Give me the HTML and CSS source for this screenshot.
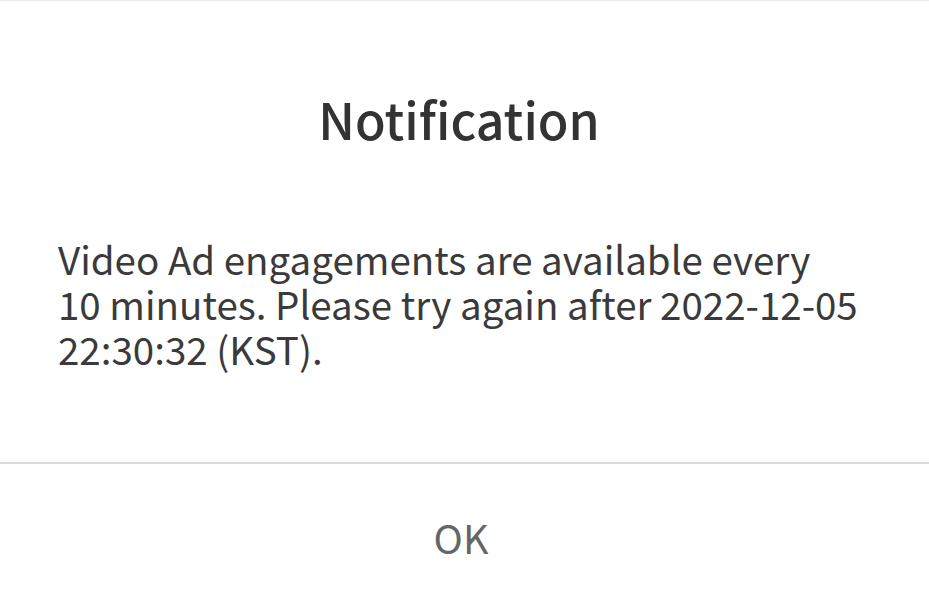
FILE: index.html
```html
<!DOCTYPE html>
<html lang="en">
<head>
  <meta charset="UTF-8">
  <meta name="viewport" content="width=device-width, initial-scale=1.0">
  <title>Notification</title>
  <link rel="stylesheet" href="styles.css">
</head>
<body>
  <div class="dialog">
    <div class="dialog-body">
      <h1 class="dialog-title">Notification</h1>
      <p class="dialog-message">Video Ad engagements are available every<br>10 minutes. Please try again after 2022-12-05<br>22:30:32 (KST).</p>
    </div>
    <div class="dialog-actions">
      <button class="btn-ok">OK</button>
    </div>
  </div>
</body>
</html>
```

FILE: styles.css
```css
html, body {
  margin: 0;
  padding: 0;
  background-color: #fff;
}

body {
  font-family: "Noto Sans CJK KR", "Noto Sans", sans-serif;
}

.dialog {
  width: 929px;
  height: 608px;
  border-top: 1px solid #ebebeb;
  box-sizing: border-box;
  display: flex;
  flex-direction: column;
}

.dialog-body {
  height: 461px;
  padding: 0 69px 0 58px;
  border-bottom: 2px solid #dcdcdc;
}

.dialog-title {
  margin: 84px 0 0;
  text-align: center;
  font-size: 50px;
  font-weight: 500;
  line-height: 66px;
  color: #333;
}

.dialog-message {
  margin: 85px -60px 0 0;
  font-size: 38.5px;
  line-height: 45px;
  color: #3a3a3a;
  white-space: nowrap;
}

.dialog-actions {
  flex: 1;
  display: flex;
  align-items: center;
  justify-content: center;
  padding-right: 7px;
}

.btn-ok {
  background: none;
  border: none;
  padding: 0;
  font-family: inherit;
  font-size: 39.5px;
  color: #666;
  cursor: pointer;
}
```
